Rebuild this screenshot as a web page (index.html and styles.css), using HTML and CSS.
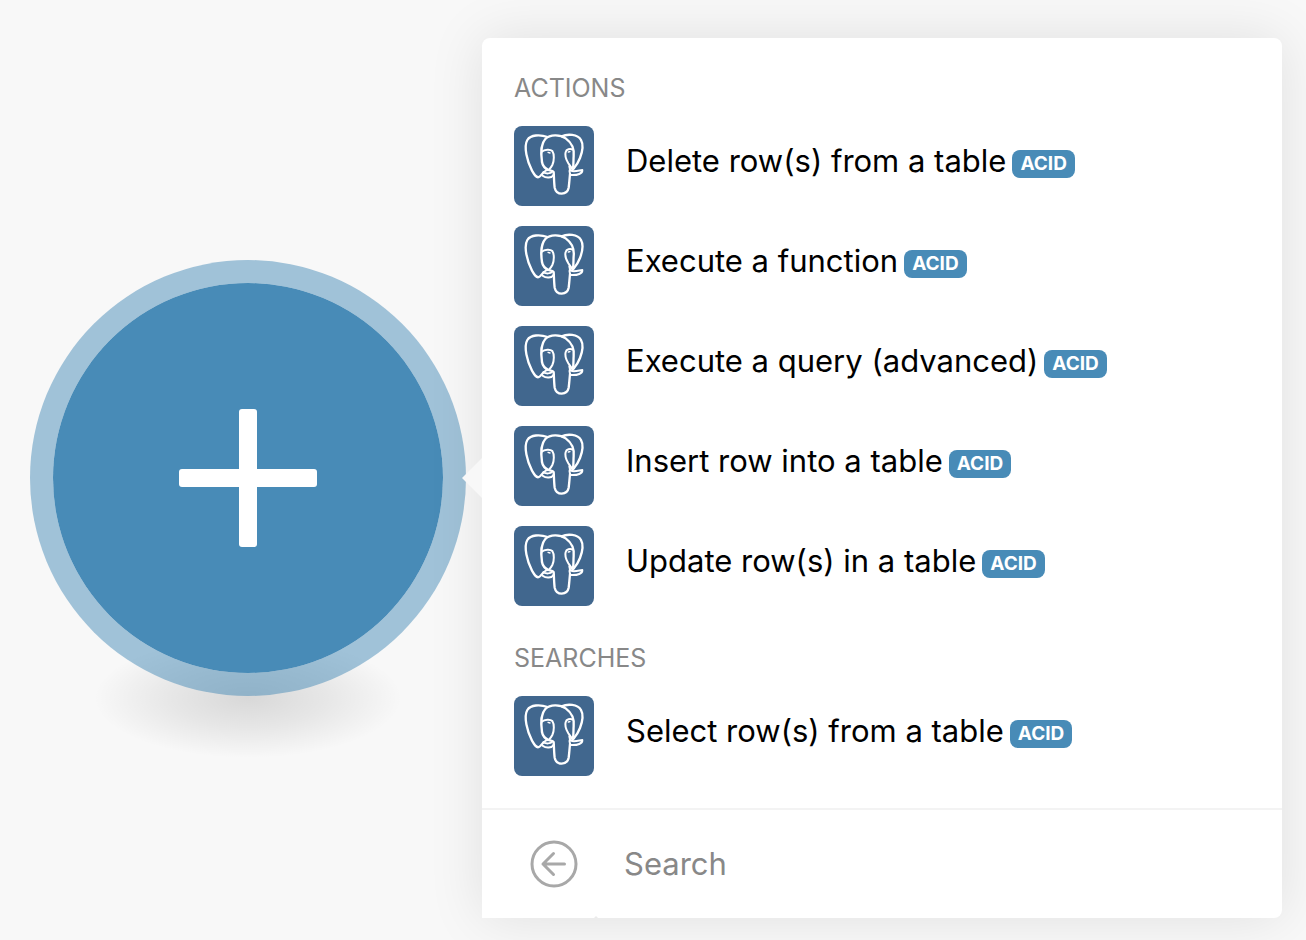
FILE: index.html
```html
<!DOCTYPE html>
<html lang="en">
<head>
<meta charset="utf-8">
<meta name="viewport" content="width=device-width, initial-scale=1">
<title>Add a module</title>
<link rel="stylesheet" href="styles.css">
</head>
<body>
<svg class="sprite" aria-hidden="true">
  <symbol id="elephant" viewBox="30 30 240 240">
    <g fill="none" stroke="#fff" stroke-width="7" stroke-linecap="round" stroke-linejoin="round">
      <path d="M131 63C108 55 80 56 70 72C58 92 70 138 84 164C92 178 97 186 105 183C110 181 112 175 119 169"/>
      <path d="M114 138C110 112 112 82 124 69C138 55 168 55 185 67C203 80 211 101 209 120C208 132 209 144 207 158"/>
      <path d="M173 61C190 53 221 54 231 72C239 86 236 105 228 126C222 142 214 152 208 159"/>
      <path stroke-width="6" d="M114 107C121 100 139 99 145 105C151 114 151 134 145 147C141 155 137 158 134 162"/>
      <path d="M114 138C116 151 124 158 134 162C140 165 146 163 149 168C150 180 150 200 152 215C155 228 162 233 173 233C186 232 192 225 194 215C196 200 197 184 198 174"/>
      <path stroke-width="6" d="M207 101C198 97 187 99 185 108C181 121 187 132 193 142C200 151 203 157 207 160"/>
      <path stroke-width="6" d="M119 169C124 163 129 161 134 162M118 169C126 173 139 174 145 167M116 179C127 188 143 186 149 176"/>
      <path stroke-width="6" d="M196 151C197 161 202 166 210 166C220 166 227 163 235 162C236 172 222 179 198 177M198 174C196 168 196 163 198 159"/>
      <path stroke-width="4" d="M132 109L138 111M193 108L198 107"/>
    </g>
  </symbol>
</svg>
<main class="stage">
  <div class="node">
    <button class="node-button" type="button" aria-label="Add module">
      <svg class="plus" viewBox="0 0 138 138" aria-hidden="true">
        <rect x="60" y="0" width="18" height="138" rx="3"/>
        <rect x="0" y="60" width="138" height="18" rx="3"/>
      </svg>
    </button>
  </div>
  <section class="panel" aria-label="Modules">
    <div class="modules">
      <h2 class="group-title">ACTIONS</h2>
      <ul class="group">
        <li><button class="module" type="button"><svg class="module-icon" aria-hidden="true"><use href="#elephant"/></svg><span class="module-name">Delete row(s) from a table</span><span class="badge">ACID</span></button></li>
        <li><button class="module" type="button"><svg class="module-icon" aria-hidden="true"><use href="#elephant"/></svg><span class="module-name">Execute a function</span><span class="badge">ACID</span></button></li>
        <li><button class="module" type="button"><svg class="module-icon" aria-hidden="true"><use href="#elephant"/></svg><span class="module-name">Execute a query (advanced)</span><span class="badge">ACID</span></button></li>
        <li><button class="module" type="button"><svg class="module-icon" aria-hidden="true"><use href="#elephant"/></svg><span class="module-name">Insert row into a table</span><span class="badge">ACID</span></button></li>
        <li><button class="module" type="button"><svg class="module-icon" aria-hidden="true"><use href="#elephant"/></svg><span class="module-name">Update row(s) in a table</span><span class="badge">ACID</span></button></li>
      </ul>
      <h2 class="group-title">SEARCHES</h2>
      <ul class="group">
        <li><button class="module" type="button"><svg class="module-icon" aria-hidden="true"><use href="#elephant"/></svg><span class="module-name">Select row(s) from a table</span><span class="badge">ACID</span></button></li>
      </ul>
    </div>
    <div class="footer">
      <button class="back" type="button" aria-label="Back">
        <svg class="back-icon" viewBox="0 0 48 48" aria-hidden="true">
          <circle cx="24" cy="24" r="22"/>
          <path d="M34.500 24H13M23.500 13.500L13 24L23.500 34.500"/>
        </svg>
      </button>
      <input class="search" type="search" placeholder="Search" aria-label="Search">
    </div>
  </section>
</main>
</body>
</html>
```
FILE: styles.css
```css
* {
  box-sizing: border-box;
}

body {
  margin: 0;
  background: #f8f8f8;
  color: #000;
  font-family: Inter, "Liberation Sans", sans-serif;
}

button,
input {
  font: inherit;
  color: inherit;
}

.sprite {
  display: block;
  width: 0;
  height: 0;
}

.stage {
  display: grid;
  grid-template-columns: 436px minmax(0, 1fr);
  gap: 16px;
  align-items: center;
  min-height: 100vh;
  padding: 38px 24px 22px 30px;
}

.node {
  position: relative;
}

.node::before {
  content: "";
  position: absolute;
  left: 64px;
  right: 64px;
  bottom: -62px;
  height: 120px;
  background: radial-gradient(closest-side, rgba(0, 0, 0, 0.13), rgba(0, 0, 0, 0.07) 50%, transparent);
}

.node-button {
  position: relative;
  display: grid;
  place-items: center;
  width: 436px;
  height: 436px;
  padding: 0;
  border: 23px solid rgba(72, 139, 183, 0.5);
  border-radius: 50%;
  background: #488bb7;
  background-clip: padding-box;
}

.plus {
  width: 138px;
  height: 138px;
  fill: #fff;
}

.panel {
  position: relative;
  border-radius: 8px 8px 8px 0;
  background: #fff;
  box-shadow: 0 0 56px rgba(0, 0, 0, 0.1);
}

.panel::before {
  content: "";
  position: absolute;
  top: 50%;
  left: -20px;
  margin-top: -20px;
  border: 20px solid transparent;
  border-left-width: 0;
  border-right-color: #f8f8f8;
}

.panel::after {
  content: "";
  position: absolute;
  left: 112px;
  bottom: 0;
  border: 2px solid transparent;
  border-top-width: 0;
  border-bottom-color: #ebebeb;
}

.modules {
  padding: 32px;
}

.group-title {
  margin: 0 0 20px;
  color: #888;
  font-size: 25px;
  font-weight: 400;
  line-height: 36px;
}

.group {
  display: grid;
  gap: 20px;
  margin: 0;
  padding: 0;
  list-style: none;
}

.group + .group-title {
  margin-top: 34px;
}

.module {
  display: flex;
  align-items: center;
  width: 100%;
  padding: 0;
  border: 0;
  background: none;
  text-align: left;
}

.module-icon {
  flex: none;
  width: 80px;
  height: 80px;
  margin-right: 32px;
  border-radius: 8px;
  background: #41678e;
}

.module-name {
  padding-bottom: 10px;
  font-size: 31px;
  line-height: 40px;
}

.badge {
  margin: 0 0 4px 6px;
  padding: 0 8px;
  border-radius: 8px;
  background: #488bb7;
  color: #fff;
  font-size: 19px;
  font-weight: 700;
  line-height: 28px;
}

.footer {
  display: flex;
  align-items: center;
  gap: 46px;
  padding: 30px 32px 30px 48px;
  border-top: 2px solid #f3f3f3;
}

.back {
  flex: none;
  padding: 0;
  border: 0;
  background: none;
}

.back-icon {
  display: block;
  width: 48px;
  height: 48px;
  fill: none;
  stroke: #a8a8a8;
  stroke-width: 3;
  stroke-linecap: round;
  stroke-linejoin: round;
}

.search {
  flex: 1;
  min-width: 0;
  padding: 0;
  border: 0;
  outline: 0;
  background: none;
  font-size: 31px;
  line-height: 40px;
}

.search::placeholder {
  color: #888;
  opacity: 1;
}
```
